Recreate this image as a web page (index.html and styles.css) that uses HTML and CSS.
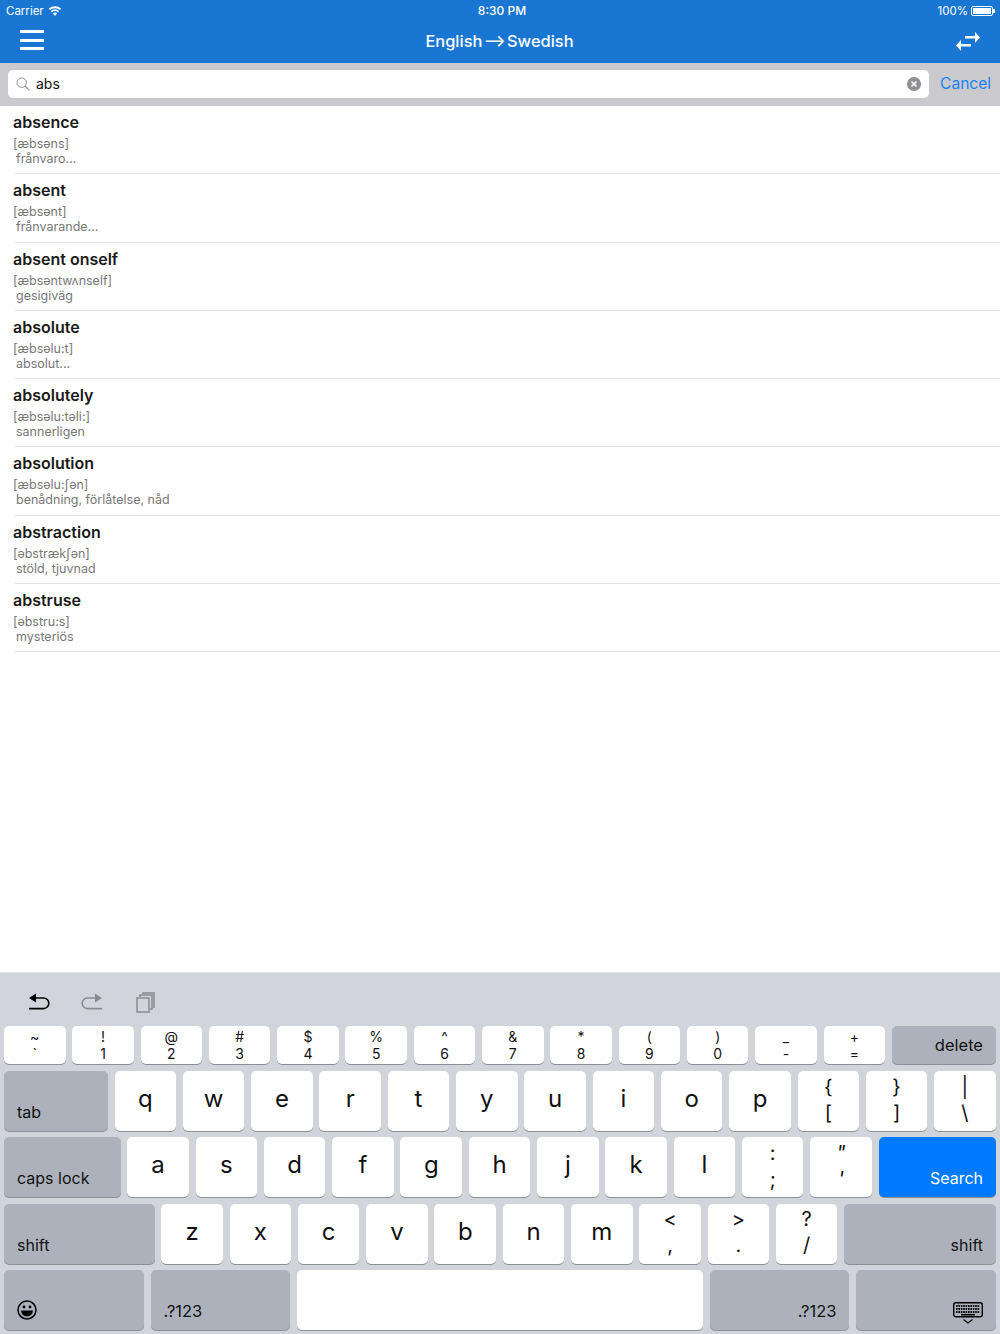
FILE: index.html
```html
<!DOCTYPE html>
<html lang="en">
  <head>
    <title>English - Swedish</title>
    <meta charset="utf-8" />
    <link rel="stylesheet" href="styles.css">
  </head>

  <body>
    <div class="app">
      <header class="topbar">
        <div class="status">
          <div class="status__left">
            Carrier
            <svg class="status__wifi" width="14" height="10" viewBox="0 0 14 10"><path d="M7 10 4.9 7.4a3.2 3.2 0 0 1 4.2 0Zm-3-3.6L2.9 5a6.3 6.3 0 0 1 8.2 0L10 6.4a4.6 4.6 0 0 0-6 0ZM2 4 .8 2.6a9.5 9.5 0 0 1 12.4 0L12 4a7.8 7.8 0 0 0-10 0Z" fill="#fff"/></svg>
          </div>
          <div class="status__time">8:30 PM</div>
          <div class="status__right">
            100%
            <span class="battery"><span class="battery__fill"></span></span>
          </div>
        </div>
        <div class="nav">
          <button class="nav__menu"><span></span><span></span><span></span></button>
          <div class="nav__title">English ⟶ Swedish</div>
          <svg class="nav__swap" width="26" height="22" viewBox="0 0 26 22"><path d="M10 5h10V1l5 5.5-5 5.5V7.5H10ZM16 13H6V9l-5 5.5L6 20v-4.5h10Z" fill="#fff"/></svg>
        </div>
      </header>

      <div class="search">
        <div class="search__field">
          <svg width="14" height="14" viewBox="0 0 14 14"><circle cx="5.7" cy="5.7" r="4.7" fill="none" stroke="#8e8e93" stroke-width="1"/><path d="m9 9 4.4 4.4" stroke="#8e8e93" stroke-width="1.2"/></svg>
          <span class="search__text">abs</span>
          <svg width="14" height="14" viewBox="0 0 14 14"><circle cx="7" cy="7" r="7" fill="#8e8e93"/><path d="m4.5 4.5 5 5m0-5-5 5" stroke="#fff" stroke-width="1.7"/></svg>
        </div>
        <div class="search__cancel">Cancel</div>
      </div>

      <ul class="results">
        <li class="result"><div class="result__word">absence</div><div class="result__ipa">[æbsəns]</div><div class="result__meaning">frånvaro...</div></li>
        <li class="result"><div class="result__word">absent</div><div class="result__ipa">[æbsənt]</div><div class="result__meaning">frånvarande...</div></li>
        <li class="result"><div class="result__word">absent onself</div><div class="result__ipa">[æbsəntwʌnself]</div><div class="result__meaning">gesigiväg</div></li>
        <li class="result"><div class="result__word">absolute</div><div class="result__ipa">[æbsəlu:t]</div><div class="result__meaning">absolut...</div></li>
        <li class="result"><div class="result__word">absolutely</div><div class="result__ipa">[æbsəlu:təli:]</div><div class="result__meaning">sannerligen</div></li>
        <li class="result"><div class="result__word">absolution</div><div class="result__ipa">[æbsəlu:ʃən]</div><div class="result__meaning">benådning, förlåtelse, nåd</div></li>
        <li class="result"><div class="result__word">abstraction</div><div class="result__ipa">[əbstrækʃən]</div><div class="result__meaning">stöld, tjuvnad</div></li>
        <li class="result"><div class="result__word">abstruse</div><div class="result__ipa">[əbstru:s]</div><div class="result__meaning">mysteriös</div></li>
      </ul>

      <div class="kb">
        <div class="kb__tools">
          <svg width="24" height="24" viewBox="0 0 24 24"><path d="M7 7h9.5a5.3 5.3 0 0 1 0 10.600H2" fill="none" stroke="#000" stroke-width="1.6"/><path d="M9 2.500 2 7l7 4.500Z"/></svg>
          <svg width="24" height="24" viewBox="0 0 24 24"><path d="M17 7H7.500a5.300 5.300 0 0 0 0 10.600H22" fill="none" stroke="#8a8a8e" stroke-width="1.6"/><path d="m15 2.500 7 4.500-7 4.500Z" fill="#8a8a8e"/></svg>
          <svg class="kb__paste" width="20" height="21" viewBox="0 0 20 21"><rect x="1" y="6" width="12" height="14" fill="none" stroke="#8a8a8e" stroke-width="1.5"/><path d="M4 5V3h12v14h-2M7 2V1h11v14h-1" fill="none" stroke="#8a8a8e" stroke-width="1.5"/></svg>
        </div>

        <div class="kb__row kb__row--num">
          <div class="key key--two"><span>~</span><span>`</span></div>
          <div class="key key--two"><span>!</span><span>1</span></div>
          <div class="key key--two"><span>@</span><span>2</span></div>
          <div class="key key--two"><span>#</span><span>3</span></div>
          <div class="key key--two"><span>$</span><span>4</span></div>
          <div class="key key--two"><span>%</span><span>5</span></div>
          <div class="key key--two"><span>^</span><span>6</span></div>
          <div class="key key--two"><span>&amp;</span><span>7</span></div>
          <div class="key key--two"><span>*</span><span>8</span></div>
          <div class="key key--two"><span>(</span><span>9</span></div>
          <div class="key key--two"><span>)</span><span>0</span></div>
          <div class="key key--two"><span>_</span><span>-</span></div>
          <div class="key key--two"><span>+</span><span>=</span></div>
          <div class="key key--fn key--delete">delete</div>
        </div>

        <div class="kb__row">
          <div class="key key--fn key--left key--tab">tab</div>
          <div class="key">q</div><div class="key">w</div><div class="key">e</div><div class="key">r</div><div class="key">t</div><div class="key">y</div><div class="key">u</div><div class="key">i</div><div class="key">o</div><div class="key">p</div>
          <div class="key key--sym"><span>{</span><span>[</span></div>
          <div class="key key--sym"><span>}</span><span>]</span></div>
          <div class="key key--sym"><span>|</span><span>\</span></div>
        </div>

        <div class="kb__row">
          <div class="key key--fn key--left key--caps">caps lock</div>
          <div class="key">a</div><div class="key">s</div><div class="key">d</div><div class="key">f</div><div class="key">g</div><div class="key">h</div><div class="key">j</div><div class="key">k</div><div class="key">l</div>
          <div class="key key--sym"><span>:</span><span>;</span></div>
          <div class="key key--sym key--slant"><span>"</span><span>'</span></div>
          <div class="key key--search">Search</div>
        </div>

        <div class="kb__row">
          <div class="key key--fn key--left key--shift">shift</div>
          <div class="key">z</div><div class="key">x</div><div class="key">c</div><div class="key">v</div><div class="key">b</div><div class="key">n</div><div class="key">m</div>
          <div class="key key--sym"><span>&lt;</span><span>,</span></div>
          <div class="key key--sym"><span>&gt;</span><span>.</span></div>
          <div class="key key--sym"><span>?</span><span>/</span></div>
          <div class="key key--fn key--right key--fill">shift</div>
        </div>

        <div class="kb__row">
          <div class="key key--fn key--left key--bottom">
            <svg class="key__emoji" width="20" height="20" viewBox="0 0 20 20"><circle cx="10" cy="10" r="9" fill="none" stroke="#000" stroke-width="1.5"/><circle cx="7" cy="7" r="1.4"/><circle cx="13" cy="7" r="1.4"/><path d="M4 10.500h12a6 6 0 0 1-12 0Z"/></svg>
          </div>
          <div class="key key--fn key--left key--bottom key--num">.?123</div>
          <div class="key key--fill"></div>
          <div class="key key--fn key--right key--bottom key--num">.?123</div>
          <div class="key key--fn key--right key--bottom">
            <svg class="key__hide" width="30" height="22" viewBox="0 0 30 22"><rect x=".7" y=".7" width="28.6" height="14" rx="2" fill="none" stroke="#000" stroke-width="1.4"/><path d="M3 4h24M3 7h24M3 10h24" stroke="#000" stroke-width="2" stroke-dasharray="1.6 .8"/><path d="M8 12.700h14" stroke="#000" stroke-width="1.6"/><path d="m10.500 17.500 4.500 3.500 4.500-3.500" fill="none" stroke="#000" stroke-width="1.2"/></svg>
          </div>
        </div>
      </div>
    </div>
  </body>
</html>
```

FILE: styles.css
```css
* {
  box-sizing: border-box;
}

html, body {
  margin: 0;
  height: 100%;
}

body {
  font-family: Inter, "Noto Sans", sans-serif;
  color: #111;
  background: #fff;
}

.app {
  display: flex;
  flex-direction: column;
  height: 1334px;
  overflow: hidden;
}

.topbar {
  height: 63px;
  background: #1976d2;
  color: #fff;
}

.status {
  display: grid;
  grid-template-columns: 1fr auto 1fr;
  align-items: center;
  height: 20px;
  padding: 1px 7px 0 6px;
  font-size: 11.5px;
}

.status__left {
  display: flex;
  align-items: center;
  gap: 4px;
}

.status__time {
  padding-left: 5px;
  font-size: 12px;
  font-weight: 500;
}

.status__right {
  display: flex;
  align-items: center;
  justify-content: flex-end;
  gap: 3px;
}

.battery {
  position: relative;
  width: 22px;
  height: 10px;
  padding: 1px;
  border: 1px solid #fff;
  border-radius: 2px;
}

.battery::after {
  content: "";
  position: absolute;
  right: -3px;
  top: 2px;
  width: 2px;
  height: 4px;
  background: #fff;
}

.battery__fill {
  display: block;
  height: 100%;
  background: #fff;
}

.nav {
  display: flex;
  align-items: center;
  justify-content: space-between;
  height: 43px;
  padding: 0 19px 0 20px;
}

.nav__menu {
  display: flex;
  flex-direction: column;
  gap: 5.5px;
  width: 24px;
  padding: 0 0 3px;
  border: 0;
  background: none;
}

.nav__menu span {
  display: block;
  width: 24px;
  height: 3px;
  background: #fff;
}

.nav__title {
  padding-bottom: 2px;
  font-size: 16.4px;
  font-weight: 500;
  word-spacing: -3px;
}

.search {
  display: flex;
  align-items: center;
  gap: 11px;
  height: 43px;
  padding: 0 8px 1px;
  background: #c9c9ce;
}

.search__field {
  display: flex;
  align-items: center;
  flex: 1;
  height: 28px;
  padding: 0 8px;
  border-radius: 5px;
  background: #fff;
}

.search__text {
  flex: 1;
  padding: 0 0 1px 6px;
  font-size: 14px;
}

.search__cancel {
  width: 52px;
  padding-bottom: 2px;
  font-size: 15.6px;
  white-space: nowrap;
  color: #1a84f5;
}

.results {
  flex: 1;
  margin: 0;
  padding: 0;
  list-style: none;
}

.result {
  position: relative;
  height: 68.3px;
  padding: 6px 0 0 13px;
}

.result::after {
  content: "";
  position: absolute;
  left: 15px;
  right: 0;
  bottom: 0;
  height: 1px;
  background: #e3e3e5;
}

.result__word {
  font-size: 16px;
  font-weight: 600;
  line-height: 21px;
  color: #1a1a1a;
}

.result__ipa, .result__meaning {
  font-size: 12.5px;
  line-height: 15px;
  color: #777;
}

.result__ipa {
  margin-top: 3px;
}

.result__meaning {
  padding-left: 3px;
}

.kb {
  height: 362px;
  padding: 0 4px;
  border-top: 1px solid #e3e5e9;
  background: #d1d5db;
}

.kb__tools {
  display: flex;
  align-items: center;
  gap: 29px;
  height: 53px;
  padding: 6px 0 0 23px;
}

.kb__paste {
  margin-left: 3px;
}

.kb__row {
  display: flex;
  gap: 6.8px;
  height: 60px;
  margin-bottom: 6.4px;
}

.kb__row--num {
  height: 38px;
  margin-bottom: 7px;
}

.key {
  display: flex;
  align-items: center;
  justify-content: center;
  flex: 0 0 61.5px;
  padding-bottom: 5px;
  border-radius: 5px;
  background: #fff;
  box-shadow: 0 1px 0 #8d9096;
  font-size: 24px;
}

.key--two, .key--sym {
  flex-direction: column;
}

.key--two {
  padding-bottom: 1px;
  font-size: 14px;
  line-height: 17px;
}

.key--sym {
  padding-bottom: 3px;
  font-size: 20px;
  line-height: 26px;
}

.key--slant {
  font-style: italic;
}

.key--fn {
  padding: 0 13px 9px;
  background: #adb1bc;
  font-size: 16px;
}

.key--left {
  align-items: flex-end;
  justify-content: flex-start;
}

.key--right {
  align-items: flex-end;
  justify-content: flex-end;
}

.key--delete {
  flex: 1;
  justify-content: flex-end;
  padding-bottom: 0;
  font-size: 16.5px;
}

.key--tab {
  flex: 0 0 103.8px;
}

.key--caps {
  flex: 0 0 116.5px;
}

.key--shift {
  flex: 0 0 150.5px;
}

.key--fill {
  flex: 1;
}

.key--bottom {
  flex: 0 0 139.8px;
}

.key--num {
  font-size: 16.5px;
}

.key--search {
  flex: 1;
  align-items: flex-end;
  justify-content: flex-end;
  padding: 0 13px 9px;
  background: #007aff;
  color: #fff;
  font-size: 16px;
}

.key__emoji {
  margin-bottom: 1px;
}

.key__hide {
  margin-bottom: -3px;
}
```
